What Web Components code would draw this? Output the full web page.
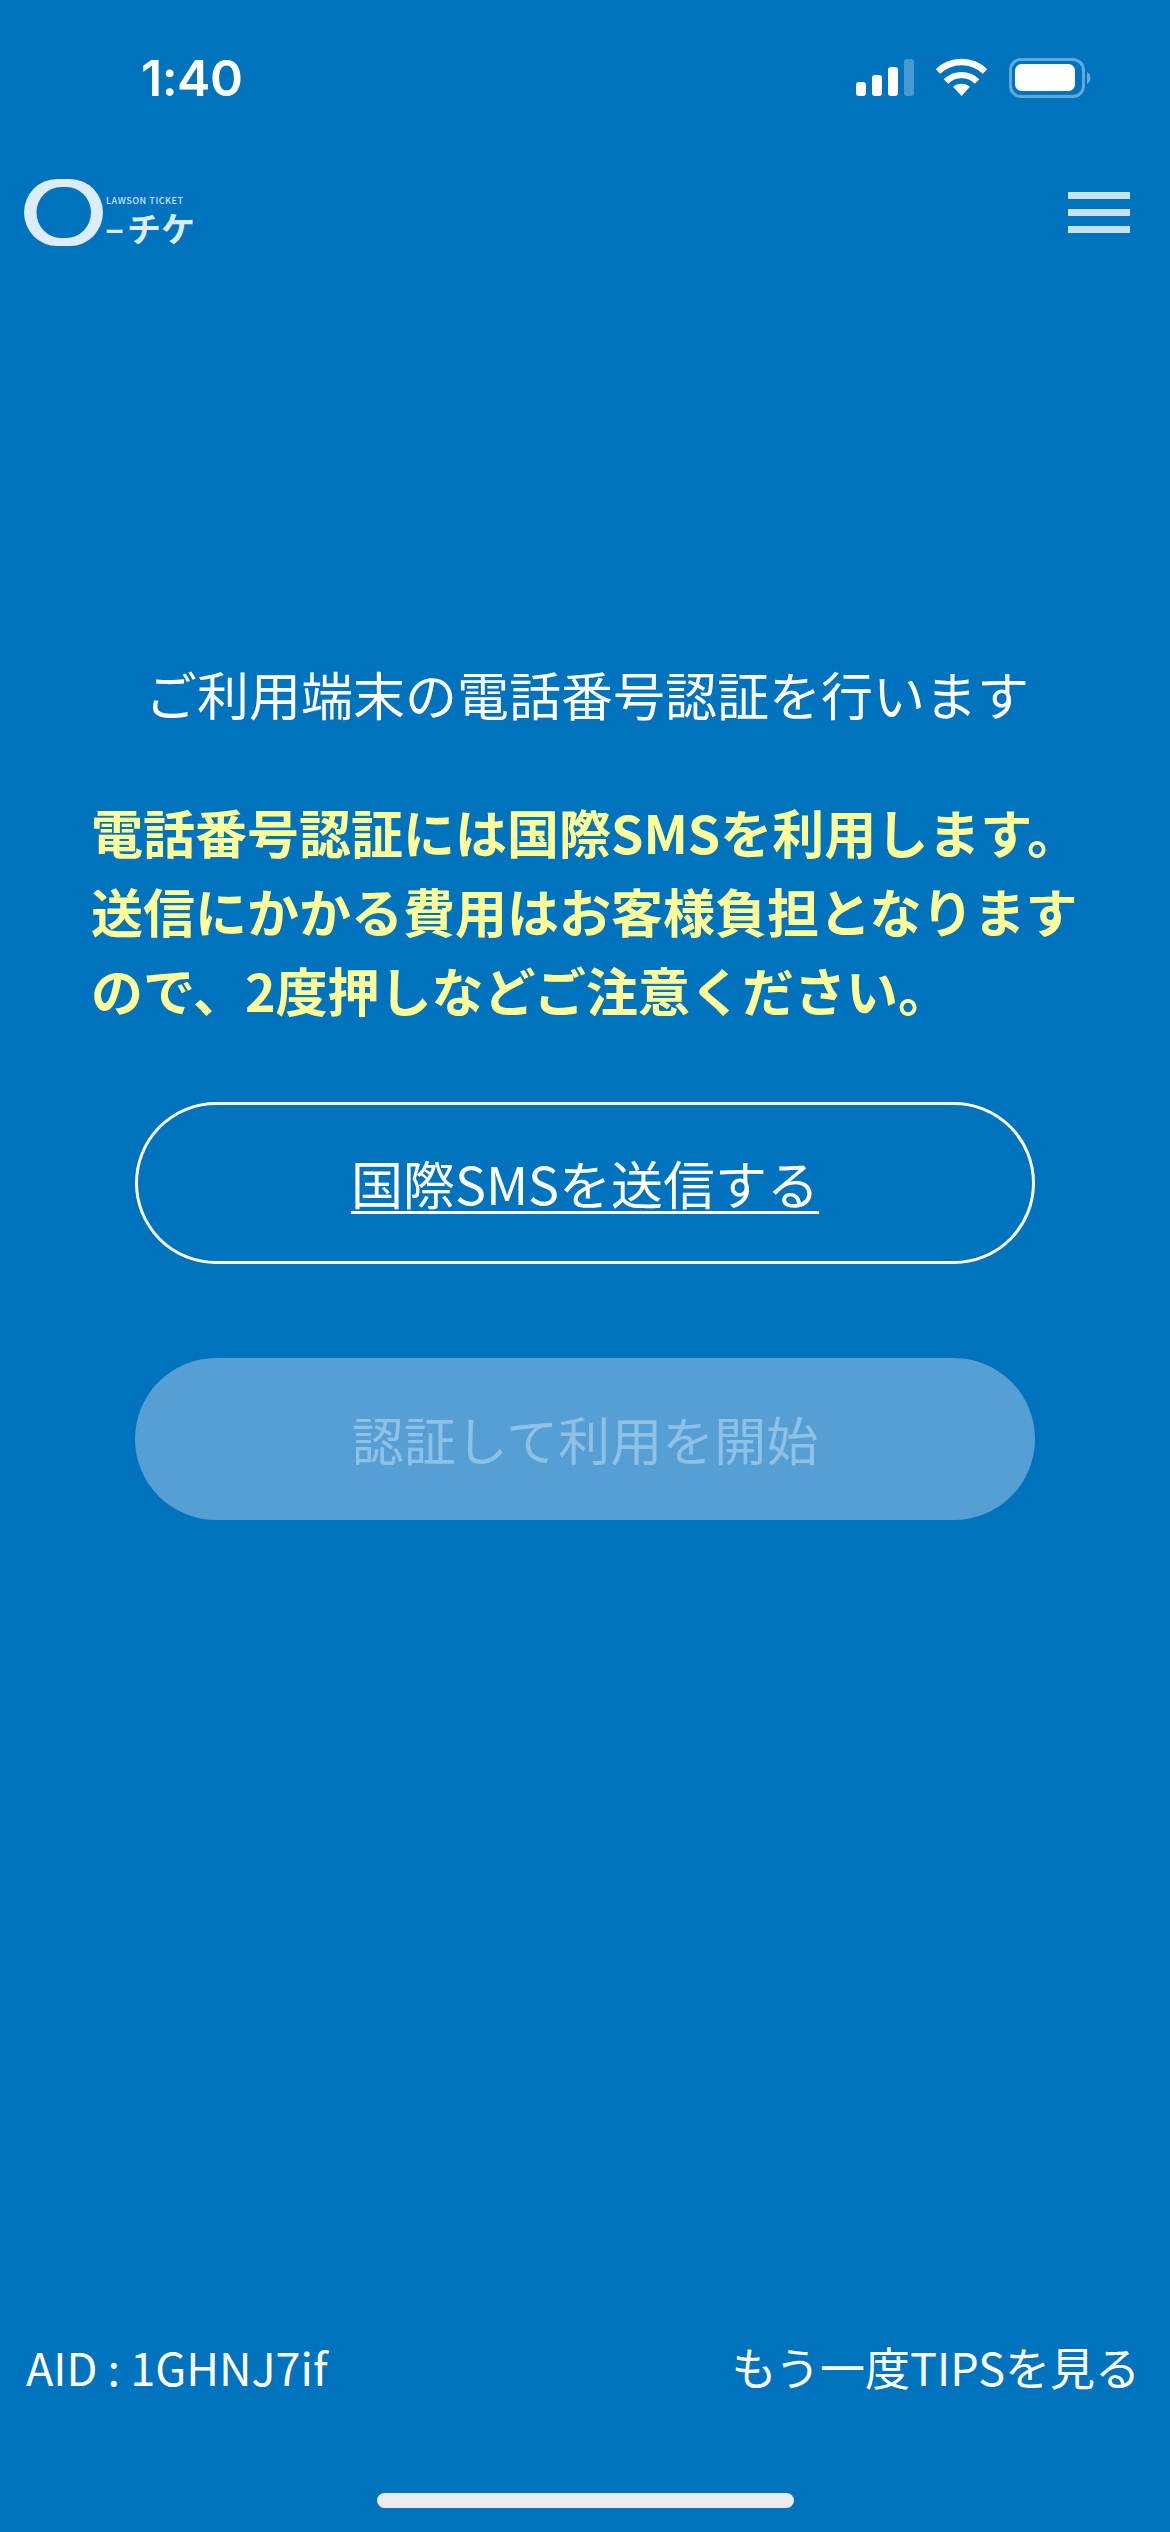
<!DOCTYPE html>
<html lang="ja"><head><meta charset="utf-8"><title>O-チケ</title>
<style>html,body{margin:0;padding:0;background:#0073bf}</style></head>
<body>
<app-screen>
  <status-bar slot="status" time="1:40"></status-bar>
  <app-header slot="header"></app-header>
  <h-title>ご利用端末の電話番号認証を行います</h-title>
  <notice-text>電話番号認証には国際SMSを利用します。<br>送信にかかる費用はお客様負担となります<br>ので、2度押しなどご注意ください。</notice-text>
  <action-button>国際SMSを送信する</action-button>
  <action-button disabled>認証して利用を開始</action-button>
  <app-footer slot="footer" aid="AID : 1GHNJ7if" link="もう一度TIPSを見る"></app-footer>
  <home-indicator slot="home"></home-indicator>
</app-screen>
<script>
const FONT = '"Noto Sans CJK JP","Noto Sans",sans-serif';
function def(name, html){
  customElements.define(name, class extends HTMLElement{
    constructor(){super();this.attachShadow({mode:'open'}).innerHTML=html;}
  });
}
def('app-screen',`<style>
:host{display:flex;flex-direction:column;width:1170px;height:2532px;background:#0073bf;color:#fff;font-family:${FONT};overflow:hidden}
main{flex:1;display:flex;flex-direction:column;padding-top:409px}
</style><slot name="status"></slot><slot name="header"></slot><main><slot></slot></main><slot name="footer"></slot><slot name="home"></slot>`);

customElements.define('status-bar',class extends HTMLElement{
  connectedCallback(){ if(this.shadowRoot) return;
  this.attachShadow({mode:'open'}).innerHTML=`<style>
:host{display:flex;height:165px;box-sizing:border-box;padding:0 78px 0 141px;justify-content:space-between;align-items:flex-start}
.t{font:600 50px/1 Inter,"Liberation Sans",sans-serif;margin-top:53px;letter-spacing:-.5px;color:#fff}
svg{display:block;margin-top:58px}
</style><div class="t">${this.getAttribute('time')}</div>
<svg width="236" height="40" viewBox="856 58 236 40" aria-hidden="true">
<rect x="856" y="82" width="10" height="14" rx="3" fill="#fff"/>
<rect x="872" y="75" width="10" height="21" rx="3" fill="#fff"/>
<rect x="888" y="67" width="10" height="29" rx="3" fill="#fff"/>
<rect x="904" y="59" width="10" height="37" rx="3" fill="#fff" fill-opacity=".28"/>
<path d="M961.500 96 l-8.500-9.200 a13 13 0 0 1 17 0z" fill="#fff"/>
<path d="M946 81.500 a22 22 0 0 1 31 0" fill="none" stroke="#fff" stroke-width="6.400"/>
<path d="M938 71.500 a34 34 0 0 1 47 0" fill="none" stroke="#fff" stroke-width="6.400"/>
<rect x="1010.500" y="59.500" width="73" height="37" rx="10.500" fill="none" stroke="#fff" stroke-opacity=".38" stroke-width="3"/>
<rect x="1015" y="64" width="60" height="27" rx="6.500" fill="#fff"/>
<path d="M1087 72 a7 7 0 0 1 0 12z" fill="#fff" fill-opacity=".42"/>
</svg>`;}
});

def('app-header',`<style>
:host{display:flex;height:90px;justify-content:space-between;align-items:flex-start;padding:0 40px 0 24px}
.menu{display:flex;flex-direction:column;gap:10px;width:62px;margin-top:27px}
.menu i{display:block;height:7px;background:#c6e2f7}
</style><brand-logo></brand-logo><div class="menu" aria-label="menu"><i></i><i></i><i></i></div>`);

def('brand-logo',`<style>
:host{display:flex;align-items:flex-start;color:#dcecf8;font-family:${FONT};margin-top:14px}
svg{display:block;flex:none}
.words{display:flex;flex-direction:column;margin:17px 0 0 3px;white-space:nowrap}
.en{font-size:9px;line-height:10px;height:10px;font-weight:500;letter-spacing:.55px;color:#cfe5f6}
.ja{display:flex;align-items:center;margin-top:4px;height:36px}
.bar{font-size:19px;line-height:36px;height:36px;font-weight:900;width:22px;margin-top:5px;margin-left:-1px}
.kana{font-size:34px;line-height:36px;height:36px;font-weight:700}
</style><svg width="79" height="67" viewBox="24 179 79 67">
<path fill-rule="evenodd" fill="#dcecf8" d="M57 179h13a33 33.500 0 0 1 0 67h-13a33 33.500 0 0 1 0-67zM61 187h5.500a24.500 25.500 0 0 1 0 51h-5.500a24.500 25.500 0 0 1 0-51z"/>
</svg><div class="words"><div class="en">LAWSON TICKET</div><div class="ja"><span class="bar">ー</span><span class="kana">チケ</span></div></div>`);

def('h-title',`<style>
:host{display:block;text-align:center;font:400 52px/60px ${FONT};color:#fff;padding-left:4px;margin-bottom:68px;white-space:nowrap}
</style><slot></slot>`);

def('notice-text',`<style>
:host{display:block;font:700 52px/79px ${FONT};color:#ffff99;padding-left:91px;margin-bottom:73px;white-space:nowrap}
</style><slot></slot>`);

customElements.define('action-button',class extends HTMLElement{
  constructor(){super();this.attachShadow({mode:'open'}).innerHTML=`<style>
:host{display:flex;align-items:center;justify-content:center;box-sizing:border-box;width:900px;height:162px;margin:0 135px 94px;border-radius:81px;border:3px solid #fff;font:400 52px/1.2 ${FONT};color:#fff;text-decoration:underline;text-decoration-thickness:3px;text-underline-offset:6px}
:host([disabled]){border:0;background:#559fd4;color:#8fc1e5;text-decoration:none}
</style><slot></slot>`;}
});

customElements.define('app-footer',class extends HTMLElement{
  connectedCallback(){ if(this.shadowRoot) return;
  this.attachShadow({mode:'open'}).innerHTML=`<style>
:host{display:flex;justify-content:space-between;align-items:center;height:60px;padding:0 30px 0 26px;margin-bottom:96px;font:400 45px/60px ${FONT};color:#fff;white-space:nowrap}
</style><span>${this.getAttribute('aid')}</span><span>${this.getAttribute('link')}</span>`;}
});

def('home-indicator',`<style>
:host{display:block;width:417px;height:15px;margin:0 auto 24px;border-radius:8px;background:#e9ecef}
</style>`);
</script>
</body></html>
